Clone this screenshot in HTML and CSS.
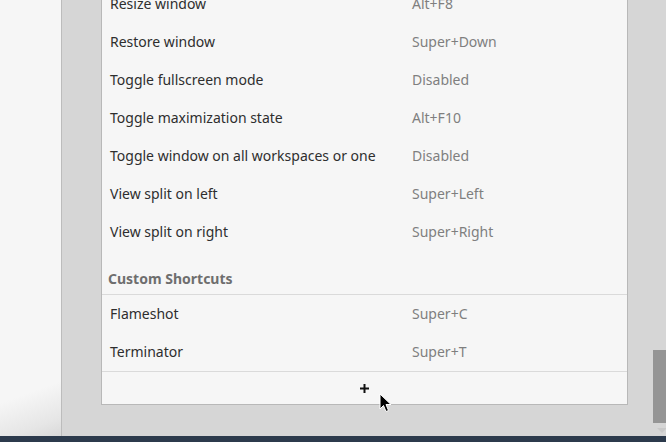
FILE: index.html
```html
<!DOCTYPE html>
<html>
<head>
<meta charset="utf-8">
<link rel="stylesheet" href="styles.css">
</head>
<body>
<div class="app">
  <div class="main">
    <aside class="sidebar"></aside>
    <section class="content">
      <div class="list">
        <div class="row"><span class="name">Resize window</span><span class="accel">Alt+F8</span></div>
        <div class="row"><span class="name">Restore window</span><span class="accel">Super+Down</span></div>
        <div class="row"><span class="name">Toggle fullscreen mode</span><span class="accel">Disabled</span></div>
        <div class="row"><span class="name">Toggle maximization state</span><span class="accel">Alt+F10</span></div>
        <div class="row"><span class="name">Toggle window on all workspaces or one</span><span class="accel">Disabled</span></div>
        <div class="row"><span class="name">View split on left</span><span class="accel">Super+Left</span></div>
        <div class="row"><span class="name">View split on right</span><span class="accel">Super+Right</span></div>
        <div class="section-header">Custom Shortcuts</div>
        <div class="row custom"><span class="name">Flameshot</span><span class="accel">Super+C</span></div>
        <div class="row custom"><span class="name">Terminator</span><span class="accel">Super+T</span></div>
        <div class="add-row">
          <svg width="9" height="9" viewBox="0 0 9 9"><rect x="3.5" y="0" width="2" height="9" fill="#111"/><rect x="0" y="3.5" width="9" height="2" fill="#111"/></svg>
        </div>
      </div>
      <div class="scrollbar"></div>
      <div class="scroll-arrow"></div>
    </section>
  </div>
  <div class="taskbar"></div>
</div>
<svg class="cursor" width="14" height="22" viewBox="0 0 14 22">
  <path d="M1 1 L1 16 L4.5 12.5 L7 18.5 L9.5 17.5 L7 11.5 L12 11.5 Z" fill="#000" stroke="#fff" stroke-width="1" stroke-linejoin="round"/>
</svg>
</body>
</html>
```
FILE: styles.css
```css
html, body {
  margin: 0;
  padding: 0;
  width: 666px;
  height: 442px;
  overflow: hidden;
}
body {
  font-family: "Noto Sans", "DejaVu Sans", sans-serif;
  font-size: 14px;
  position: relative;
}
.app {
  display: flex;
  flex-direction: column;
  height: 442px;
}
.main {
  display: flex;
  height: 436px;
}
.sidebar {
  width: 61px;
  border-right: 1px solid #bcbcbc;
  background: linear-gradient(160deg, #f6f6f6 0%, #f6f6f6 88%, #e6e6e6 96%, #d9d9d9 100%);
}
.content {
  flex: 1;
  background: #d6d6d6;
  padding-left: 39px;
  position: relative;
  overflow: hidden;
}
.list {
  width: 525px;
  margin-top: -15px;
  background: #f6f6f6;
  border: 1px solid #b8b8b8;
}
.row {
  display: grid;
  grid-template-columns: 302px 1fr;
  align-items: center;
  height: 38px;
  box-sizing: border-box;
  padding: 0 0 4px 8px;
}
.row.custom {
  padding-bottom: 2px;
}
.name {
  color: #2e2e2e;
}
.accel {
  color: #7f7f7f;
}
.section-header {
  height: 43px;
  box-sizing: border-box;
  padding: 18px 0 0 6px;
  font-weight: bold;
  color: #6e6e6e;
  border-bottom: 1px solid #dadada;
  line-height: 18px;
}
.add-row {
  height: 32px;
  border-top: 1px solid #dadada;
  display: flex;
  align-items: center;
  justify-content: center;
}
.add-row svg {
  display: block;
}
.scrollbar {
  position: absolute;
  left: 591px;
  top: 350px;
  width: 13px;
  height: 73px;
  background: #959595;
}
.scroll-arrow {
  position: absolute;
  left: 595px;
  top: 428px;
  width: 0;
  height: 0;
  border-left: 5px solid transparent;
  border-right: 5px solid transparent;
  border-top: 5px solid #c9c9c9;
}
.taskbar {
  height: 6px;
  background: #2c3a4c;
}
.cursor {
  position: absolute;
  left: 379px;
  top: 393px;
}
```
